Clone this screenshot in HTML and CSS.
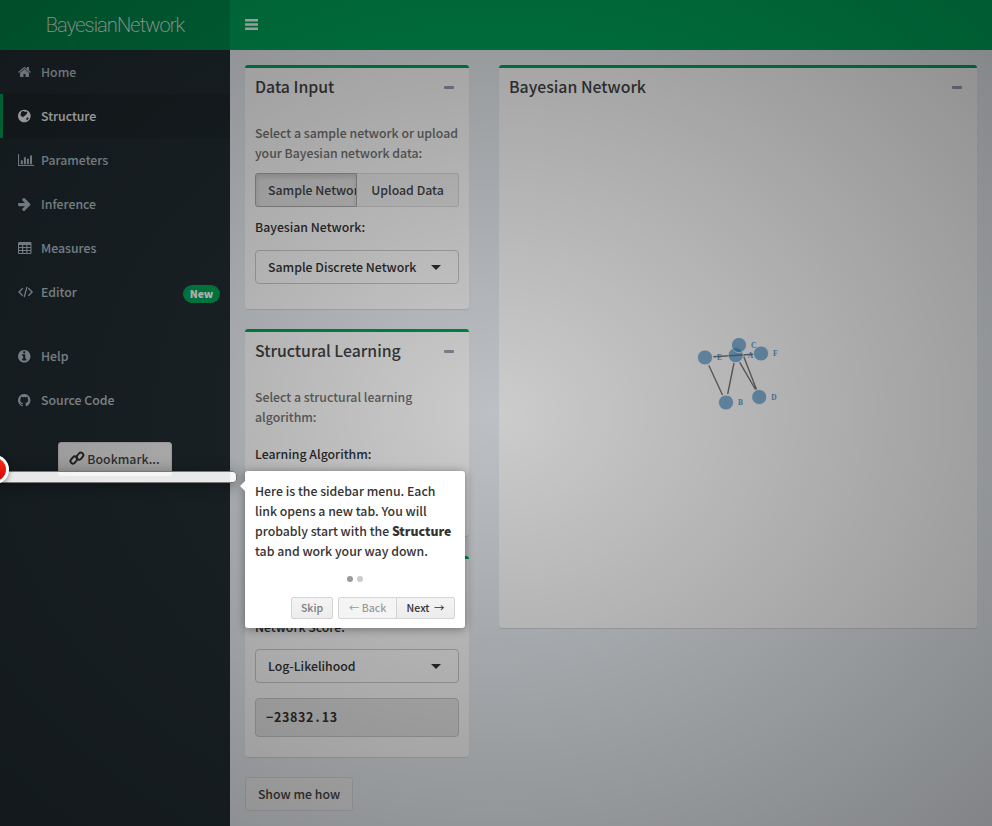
FILE: index.html
```html
<!DOCTYPE html>
<html lang="en">
<head>
<meta charset="utf-8">
<title>BayesianNetwork</title>
<link rel="stylesheet" href="styles.css">
</head>
<body>
<header class="header">
  <div class="logo"><span>BayesianNetwork</span></div>
  <nav class="navbar">
    <svg class="bars" viewBox="0 0 13 12"><path d="M0 0h13v2.6H0zM0 4.2h13v2.6H0zM0 8.4h13v2.6H0z"/></svg>
  </nav>
</header>
<div class="wrapper">
  <aside class="sidebar">
    <ul class="menu">
      <li class="item"><svg class="icon" viewBox="64 0 1792 1792"><path d="M1472 992v480q0 26-19 45t-45 19h-384v-384h-256v384h-384q-26 0-45-19t-19-45v-480q0-1 .5-3t.5-3l575-474 575 474q1 2 1 6zm223-69l-62 74q-8 9-21 11h-3q-13 0-21-7l-692-577-692 577q-12 8-24 7-13-2-21-11l-62-74q-8-10-7-23.5t11-21.5l719-599q32-26 76-26t76 26l244 204v-195q0-14 9-23t23-9h192q14 0 23 9t9 23v408l219 182q10 8 11 21.5t-7 23.5z"/></svg><span>Home</span></li>
      <li class="item active"><svg class="icon" viewBox="0 0 14 14"><path fill-rule="evenodd" d="M6.3 .7a6.3 6.3 0 1 0 .01 0zM3.1 3.2L4.5 2l1.6.2 1 .9 1.3-.6 1 .8-.6.9.4 1-1.5.3-.8 1.4-1.4.3-.2 1.3-1.2-1-1.1-.2-.4-1.6zM8.4 8.7l1.7-.3.8.5-1 1.6-1.4 1.1z"/></svg><span>Structure</span></li>
      <li class="item"><svg class="icon wide" viewBox="0 0 16 14"><path d="M0 1h1.1v11H16v1.1H0zM2.8 7.2h2v4h-2zM5.9 4.2h2v7h-2zM8.900 5.800h2v5.400h-2zM12 2.600h2v8.600h-2z"/></svg><span>Parameters</span></li>
      <li class="item"><svg class="icon" viewBox="120 64 1664 1664"><path d="M1600 960q0 54-37 91l-651 651q-39 37-91 37-51 0-90-37l-75-75q-38-38-38-91t38-91l293-293h-704q-52 0-84.500-37.500t-32.500-90.500v-128q0-53 32.500-90.500t84.500-37.500h704l-293-294q-38-36-38-90t38-90l75-75q38-38 90-38 53 0 91 38l651 651q37 35 37 90z"/></svg><span>Inference</span></li>
      <li class="item"><svg class="icon" viewBox="0 0 14 14"><path fill-rule="evenodd" d="M1.2 1h11.200q1.100 0 1.100 1.100v9.800q0 1.100-1.100 1.100H1.200Q0 13 0 11.900V2.100Q0 1 1.200 1zM1.100 4v2h3V4zM5.200 4v2h3.100V4zM9.400 4v2h3V4zM1.100 7v2h3V7zM5.200 7v2h3.100V7zM9.400 7v2h3V7zM1.100 10v2h3v-2zM5.200 10v2h3.100v-2zM9.400 10v2h3v-2z"/></svg><span>Measures</span></li>
      <li class="item"><svg class="icon wide" viewBox="0 0 16 14"><path class="line" d="M4.700 3.300L1 7l3.700 3.700M10.400 3.300L14.100 7l-3.700 3.700M9 1.800L6.200 12.200"/></svg><span>Editor</span><small class="tag">New</small></li>
      <li class="item gap"><svg class="icon" viewBox="128 0 1728 1728"><path d="M1152 1376v-160q0-14-9-23t-23-9h-96v-512q0-14-9-23t-23-9h-320q-14 0-23 9t-9 23v160q0 14 9 23t23 9h96v320h-96q-14 0-23 9t-9 23v160q0 14 9 23t23 9h448q14 0 23-9t9-23zm-128-896v-160q0-14-9-23t-23-9h-192q-14 0-23 9t-9 23v160q0 14 9 23t23 9h192q14 0 23-9t9-23zm640 416q0 209-103 385.500t-279.500 279.500-385.500 103-385.500-103-279.500-279.500-103-385.500 103-385.500 279.500-279.500 385.500-103 385.500 103 279.500 279.500 103 385.500z"/></svg><span>Help</span></li>
      <li class="item"><svg class="icon" viewBox="128 0 1728 1728"><path d="M896 128q209 0 385.500 103t279.500 279.500 103 385.500q0 251-146.500 451.500t-378.500 277.500q-27 5-40-7t-13-30q0-3 .5-76.500t.5-134.500q0-97-52-142 57-6 102.500-18t94-39 81-66.500 53-105 20.500-150.500q0-119-79-206 37-91-8-204-28-9-81 11t-92 44l-38 24q-93-26-192-26t-192 26q-16-11-42.500-27t-83.500-38.500-85-13.500q-45 113-8 204-79 87-79 206 0 85 20.500 150t52.500 105 80.500 67 94 39 102.500 18q-39 36-49 103-21 10-45 15t-57 5-65.500-21.500-55.500-62.500q-19-32-48.500-52t-49.500-24l-20-3q-21 0-29 4.500t-5 11.500 9 14 13 12l7 5q22 10 43.500 38t31.500 51l10 23q13 38 44 61.500t67 30 69.500 7 55.500-3.500l23-4q0 38 .5 88.500t.5 54.500q0 18-13 30t-40 7q-232-77-378.500-277.500t-146.500-451.500q0-209 103-385.500t279.500-279.500 385.500-103z"/></svg><span>Source Code</span></li>
    </ul>
    <button class="btn bookmark"><svg class="chain" viewBox="0 0 14 14"><g transform="rotate(-50 7 7)"><rect x="-.4" y="3.400" width="7.800" height="5" rx="2.500"/><rect x="6.400" y="5.600" width="7.800" height="5" rx="2.500"/></g></svg><span>Bookmark...</span></button>
  </aside>
  <main class="content">
    <section class="left">
      <div class="box">
        <div class="box-head"><h3>Data Input</h3><i class="minus"></i></div>
        <div class="box-body">
          <p class="help">Select a sample network or upload<br>your Bayesian network data:</p>
          <div class="group"><span class="btn seg on">Sample Network</span><span class="btn seg">Upload Data</span></div>
          <label>Bayesian Network:</label>
          <div class="select"><span>Sample Discrete Network</span><i class="caret"></i></div>
        </div>
      </div>
      <div class="box learning">
        <div class="box-head"><h3>Structural Learning</h3><i class="minus"></i></div>
        <div class="box-body">
          <p class="help">Select a structural learning<br>algorithm:</p>
          <label class="spaced">Learning Algorithm:</label>
        </div>
      </div>
      <div class="box score">
        <div class="box-body">
          <label>Network Score:</label>
          <div class="select"><span>Log-Likelihood</span><i class="caret"></i></div>
          <pre>−23832<span class="point">.</span>13</pre>
        </div>
      </div>
      <button class="btn show">Show me how</button>
    </section>
    <section class="right">
      <div class="box network">
        <div class="box-head"><h3>Bayesian Network</h3><i class="minus"></i></div>
        <svg class="graph" viewBox="499 108 478 520">
          <g class="edges"><path d="M713.300 356.800L753.300 354.200M708.800 365.300L722.500 395M734 363L727.700 394M739.700 362.300L755.500 389.500M743.700 356.500L756.500 389.500"/></g>
          <g class="nodes"><circle cx="735.700" cy="355.200" r="7.600"/><circle cx="726" cy="402.500" r="7.600"/><circle cx="739" cy="345" r="7.600"/><circle cx="759.200" cy="397" r="7.600"/><circle cx="705" cy="357.500" r="7.600"/><circle cx="761" cy="353.500" r="7.600"/></g>
          <g class="names"><text x="747.700" y="357.500">A</text><text x="738" y="405">B</text><text x="751" y="347.500">C</text><text x="771.200" y="399.500">D</text><text x="717" y="360">E</text><text x="773" y="356">F</text></g>
        </svg>
      </div>
    </section>
  </main>
</div>
<div class="overlay"></div>
<div class="highlight"><span class="step"></span></div>
<div class="tooltip">
  <p>Here is the sidebar menu. Each<br>link opens a new tab. You will<br>probably start with the <b>Structure</b><br>tab and work your way down.</p>
  <div class="bullets"><i class="current"></i><i></i></div>
  <div class="actions"><span class="tbtn skip">Skip</span><span class="tbtn back">← Back</span><span class="tbtn next">Next →</span></div>
</div>
</body>
</html>
```
FILE: styles.css
```css
* { box-sizing: border-box; }
body {
  margin: 0;
  height: 826px;
  overflow: hidden;
  font: 500 12.300px/20px "Noto Sans CJK SC", "Noto Sans", sans-serif;
  color: #333;
  background: #ecf0f5;
}
.header { display: flex; height: 50px; }
.logo {
  width: 230px;
  background: #008d4c;
  color: #fff;
  text-align: center;
  font: 200 20px/50px Roboto, sans-serif;
  letter-spacing: -0.850px;
}
.navbar { flex: 1; background: #00a65a; padding: 19px 15px; }
.bars { display: block; width: 13px; height: 12px; fill: #fff; }
.wrapper { display: flex; height: 776px; }
.sidebar { width: 230px; background: #222d32; }
.menu { list-style: none; margin: 0; padding: 0; }
.item {
  display: flex;
  align-items: center;
  height: 44px;
  padding: 0 10px 0 15px;
  border-left: 3px solid transparent;
  color: #b8c7ce;
}
.item.active { background: #1e282c; border-left-color: #00a65a; color: #fff; }
.item.gap { margin-top: 20px; }
.icon { width: 14px; height: 14px; margin-right: 9px; fill: currentColor; flex: none; }
.icon.wide { width: 16px; margin-right: 7px; }
.line { fill: none; stroke: currentColor; stroke-width: 1.3; }
.tag {
  margin: 4px 0 0 auto;
  width: 37px;
  height: 18px;
  border-radius: 9px;
  background: #00a65a;
  color: #fff;
  font-size: 10.500px;
  font-weight: 900;
  line-height: 18px;
  text-align: center;
}
.btn {
  font: inherit;
  color: #444;
  background: #f4f4f4;
  border: 1px solid #ddd;
  border-radius: 3px;
  height: 34px;
  line-height: 20px;
  padding: 6px 12px;
  white-space: nowrap;
}
.bookmark {
  display: flex;
  align-items: center;
  justify-content: center;
  gap: 3px;
  width: 114px;
  margin: 20px 0 0 58px;
  padding: 0;
}
.chain { width: 14px; height: 14px; fill: none; stroke: #333; stroke-width: 1.900; margin-top: -3px; overflow: visible; }
.content { flex: 1; display: flex; gap: 30px; padding: 15px; }
.left { width: 224px; }
.right { flex: 1; }
.box {
  background: #fff;
  border-top: 3px solid #00a65a;
  border-radius: 3px;
  box-shadow: 0 1px 1px rgba(0,0,0,.1);
  margin-bottom: 20px;
  height: 244px;
}
.learning { height: 207px; }
.score { height: 201px; padding-top: 48px; }
.network { height: 563px; }
.box-head { display: flex; justify-content: space-between; padding: 9px 15px 11px 10px; height: 40px; }
h3 { margin: 0; font-size: 15.850px; font-weight: 500; line-height: 20px; color: #444; }
.minus { width: 10px; height: 3px; border-radius: 1px; background: #97a0b3; margin-top: 9px; }
.box-body { padding: 15px 10px 10px; }
.help { margin: 0 0 10px; color: #737373; white-space: nowrap; }
.group { display: flex; height: 34px; margin-bottom: 10px; }
.seg { width: 102px; overflow: hidden; border-radius: 0 3px 3px 0; text-align: center; border-left: 0; padding: 6px 0; }
.seg.on {
  text-align: left;
  padding-left: 12px;
  border: 1px solid #adadad;
  border-radius: 3px 0 0 3px;
  background: #e7e7e7;
  box-shadow: inset 0 3px 5px rgba(0,0,0,.125);
}
label { display: block; margin-bottom: 13px; color: #333; }
label.spaced { margin-top: 17px; }
.select {
  display: flex;
  justify-content: space-between;
  align-items: center;
  height: 34px;
  padding: 0 17px 0 12px;
  border: 1px solid #ccc;
  border-radius: 4px;
}
.caret { border: 5px solid transparent; border-top-color: #333; border-bottom: 0; }
pre {
  margin: 15px 0 0;
  height: 39px;
  padding: 8px 10px;
  background: #e9e9e9;
  border: 1px solid #ccc;
  border-radius: 4px;
  font: 700 12.500px/20px "Noto Sans CJK SC", sans-serif;
  letter-spacing: .6px;
}
.point { display: inline-block; width: 7.800px; text-align: center; }
.show { display: block; width: 108px; padding: 6px 0; }
.score .box-body { padding-top: 10px; }
.score label { margin-bottom: 12px; }
.graph { display: block; width: 478px; height: 520px; }
.edges { stroke: #777; stroke-width: 1.400; }
.nodes { fill: #3182bd; stroke: #fff; stroke-width: 1; }
.nodes circle { opacity: .6; }
.names { fill: #3182bd; font: 700 7.500px "Liberation Serif", serif; opacity: .8; }
.overlay {
  position: absolute;
  inset: 0;
  opacity: .5;
  background: radial-gradient(ellipse farthest-corner at center, rgba(0,0,0,.4) 0, rgba(0,0,0,.9) 100%);
}
.highlight {
  position: absolute;
  left: -5px;
  top: 471px;
  width: 242px;
  height: 12px;
  background: rgba(255,255,255,.9);
  border: 1px solid #777;
  border-radius: 4px;
  box-shadow: 0 2px 15px rgba(0,0,0,.4);
}
.step {
  position: absolute;
  left: -16px;
  top: -17px;
  width: 29px;
  height: 29px;
  border: 3px solid #fff;
  border-radius: 50%;
  background: linear-gradient(#ff3019, #cf0404);
  box-shadow: 0 2px 5px rgba(0,0,0,.4);
}
.tooltip {
  position: absolute;
  left: 245px;
  top: 471px;
  width: 220px;
  height: 157px;
  padding: 10px;
  background: #fff;
  border-radius: 3px;
  box-shadow: 0 1px 10px rgba(0,0,0,.4);
}
.tooltip::before {
  content: "";
  position: absolute;
  left: -5px;
  top: 10px;
  border: 5px solid transparent;
  border-left: 0;
  border-right-color: #fff;
}
.tooltip p { margin: 0; white-space: nowrap; }
.tooltip b { font-weight: 900; }
.bullets { display: flex; justify-content: center; gap: 4px; margin-top: 15px; }
.bullets i { width: 6px; height: 6px; border-radius: 50%; background: #ccc; }
.bullets i.current { background: #999; }
.actions { display: flex; margin-top: 15px; justify-content: flex-end; }
.tbtn {
  width: 59px;
  height: 22px;
  border: 1px solid #d4d4d4;
  background: linear-gradient(#f4f4f4, #ececec);
  font-size: 10.500px;
  line-height: 20px;
  text-align: center;
  white-space: nowrap;
}
.skip { width: 42px; margin-right: 5px; border-radius: 2px; color: #7a7a7a; }
.back { border-radius: 2px 0 0 2px; color: #9a9a9a; background: #f4f4f4; }
.next { border-radius: 0 2px 2px 0; margin-left: -1px; word-spacing: 2px; }
```
